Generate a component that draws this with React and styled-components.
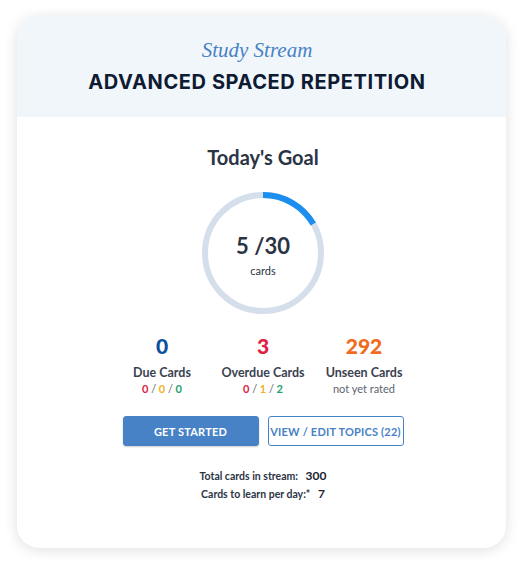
import React from "react";
import styled, { createGlobalStyle } from "styled-components";

const theme = {
  headerBg: "#f1f6fb",
  ink: "#0f1a33",
  text: "#2b3444",
  muted: "#5c6470",
  blue: "#4782c6",
  ring: "#d5dfeb",
  ringFill: "#1b8ef0",
  dueBlue: "#0b4fa0",
  red: "#e0203f",
  orange: "#f26a1b",
  yellow: "#f2b01e",
  green: "#1ea16a",
};

const GlobalStyle = createGlobalStyle`
  html, body { margin: 0; padding: 0; background: #ffffff; }
  body { font-family: "Lato", "Noto Sans", sans-serif; }
`;

const Page = styled.div`
  width: 528px;
  height: 566px;
  padding: 16px 22px 18px 17px;
  box-sizing: border-box;
`;

const Card = styled.div`
  height: 532px;
  border-radius: 22px;
  background: #fff;
  box-shadow: 0 2px 14px rgba(0, 0, 0, 0.13);
  overflow: hidden;
  display: flex;
  flex-direction: column;
`;

const Header = styled.div`
  background: ${theme.headerBg};
  height: 101px;
  display: flex;
  flex-direction: column;
  align-items: center;
  padding: 21px 9px 0 0;
  box-sizing: border-box;
`;

const Kicker = styled.div`
  font-family: "Liberation Serif", "DejaVu Serif", serif;
  font-style: italic;
  font-size: 21px;
  color: ${theme.blue};
  line-height: 26px;
`;

const Title = styled.h1`
  margin: 6px 0 0;
  font-family: "Inter", "Liberation Sans", sans-serif;
  font-weight: 700;
  font-size: 20px;
  letter-spacing: 0.6px;
  color: ${theme.ink};
  line-height: 26px;
`;

const Body = styled.div`
  display: flex;
  flex-direction: column;
  align-items: center;
  padding: 28px 0 0 3px;
`;

const Goal = styled.h2`
  margin: 0;
  font-size: 20px;
  font-weight: 700;
  color: ${theme.text};
  line-height: 24px;
`;

const Ring = styled.div`
  position: relative;
  width: 124px;
  height: 124px;
  margin-top: 22px;
`;

const RingLabel = styled.div`
  position: absolute;
  inset: 0;
  display: flex;
  flex-direction: column;
  align-items: center;
  justify-content: center;
  padding-top: 4px;
  box-sizing: border-box;
`;

const Count = styled.div`
  font-size: 22px;
  font-weight: 700;
  color: ${theme.text};
  line-height: 26px;
`;

const Unit = styled.div`
  font-size: 11px;
  color: ${theme.text};
  margin-top: 5px;
`;

const Stats = styled.div`
  display: grid;
  grid-template-columns: repeat(3, 101px);
  margin-top: 19px;
`;

const Stat = styled.div`
  display: flex;
  flex-direction: column;
  align-items: center;
`;

const Num = styled.div`
  font-size: 21px;
  font-weight: 900;
  color: ${(p) => p.$color};
  line-height: 24px;
`;

const Label = styled.div`
  font-size: 12.5px;
  font-weight: 700;
  color: #3a4250;
  margin-top: 7px;
  line-height: 16px;
`;

const Sub = styled.div`
  font-size: 11px;
  color: ${theme.muted};
  margin-top: 1px;
  line-height: 14px;
  font-weight: 700;
`;

const Plain = styled.span`
  font-weight: 400;
  color: ${theme.muted};
`;

const C = styled.span`
  color: ${(p) => p.$color};
`;

const Buttons = styled.div`
  display: flex;
  gap: 9px;
  margin-top: 20px;
`;

const Button = styled.button`
  width: 136px;
  height: 30px;
  padding: 0;
  white-space: nowrap;
  border-radius: 3px;
  border: 1.5px solid ${theme.blue};
  background: ${(p) => (p.$primary ? theme.blue : "#fff")};
  color: ${(p) => (p.$primary ? "#fff" : theme.blue)};
  font-family: inherit;
  font-size: 11px;
  font-weight: 700;
  letter-spacing: 0.2px;
  box-sizing: border-box;
  box-shadow: ${(p) => (p.$primary ? "0 1px 2px rgba(0,0,0,0.2)" : "none")};
`;

const Facts = styled.div`
  margin-top: 23px;
  display: flex;
  flex-direction: column;
  align-items: center;
  gap: 4px;
`;

const Fact = styled.div`
  font-size: 10.5px;
  font-weight: 700;
  color: ${theme.text};
  line-height: 14px;
`;

const FactVal = styled.span`
  margin-left: 5px;
  font-size: 12px;
  color: #1c2230;
`;

const ProgressRing = ({ value, total }) => {
  const r = 58;
  const c = 2 * Math.PI * r;
  const frac = value / total;
  return (
    <svg width="124" height="124" viewBox="0 0 124 124">
      <circle cx="62" cy="62" r={r} fill="none" stroke={theme.ring} strokeWidth="6" />
      <circle
        cx="62"
        cy="62"
        r={r}
        fill="none"
        stroke={theme.ringFill}
        strokeWidth="6"
        strokeDasharray={`${c * frac} ${c}`}
        transform="rotate(-90 62 62)"
      />
    </svg>
  );
};

export default function App() {
  return (
    <>
      <GlobalStyle />
      <Page>
        <Card>
          <Header>
            <Kicker>Study Stream</Kicker>
            <Title>ADVANCED SPACED REPETITION</Title>
          </Header>
          <Body>
            <Goal>Today's Goal</Goal>
            <Ring>
              <ProgressRing value={5} total={30} />
              <RingLabel>
                <Count>5 /30</Count>
                <Unit>cards</Unit>
              </RingLabel>
            </Ring>
            <Stats>
              <Stat>
                <Num $color={theme.dueBlue}>0</Num>
                <Label>Due Cards</Label>
                <Sub>
                  <C $color={theme.red}>0</C> <Plain>/</Plain> <C $color={theme.yellow}>0</C>{" "}
                  <Plain>/</Plain> <C $color={theme.green}>0</C>
                </Sub>
              </Stat>
              <Stat>
                <Num $color={theme.red}>3</Num>
                <Label>Overdue Cards</Label>
                <Sub>
                  <C $color={theme.red}>0</C> <Plain>/</Plain> <C $color={theme.yellow}>1</C>{" "}
                  <Plain>/</Plain> <C $color={theme.green}>2</C>
                </Sub>
              </Stat>
              <Stat>
                <Num $color={theme.orange}>292</Num>
                <Label>Unseen Cards</Label>
                <Sub>
                  <Plain>not yet rated</Plain>
                </Sub>
              </Stat>
            </Stats>
            <Buttons>
              <Button $primary>GET STARTED</Button>
              <Button>VIEW / EDIT TOPICS (22)</Button>
            </Buttons>
            <Facts>
              <Fact>
                Total cards in stream: <FactVal>300</FactVal>
              </Fact>
              <Fact>
                Cards to learn per day:* <FactVal>7</FactVal>
              </Fact>
            </Facts>
          </Body>
        </Card>
      </Page>
    </>
  );
}
